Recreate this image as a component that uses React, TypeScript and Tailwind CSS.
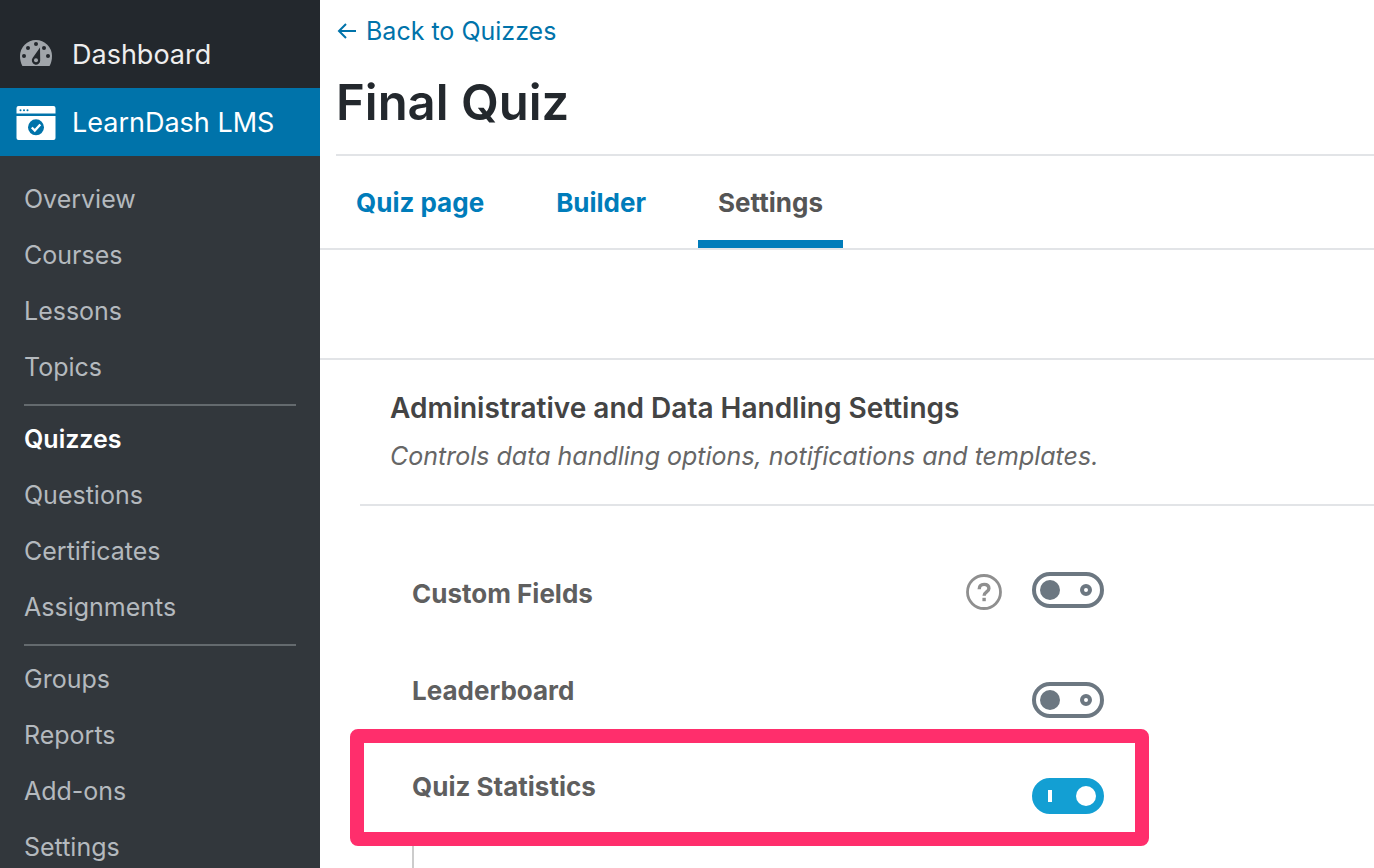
import React from 'react';
import { clsx } from 'clsx';

const menuGroups = [
  ['Overview', 'Courses', 'Lessons', 'Topics'],
  ['Quizzes', 'Questions', 'Certificates', 'Assignments'],
  ['Groups', 'Reports', 'Add-ons', 'Settings'],
];

const tabs = ['Quiz page', 'Builder', 'Settings'];

const DashboardIcon: React.FC = () => (
  <svg viewBox="0 0 40 40" className="size-10 shrink-0" aria-hidden="true">
    <path d="M20 6a16 16 0 0 1 16 16c0 3.800-.8 7-2.400 10H6.400C4.800 29 4 25.800 4 22A16 16 0 0 1 20 6z" fill="#a0a5aa" />
    <g fill="#23282d">
      <circle cx="20" cy="10" r="2" />
      <circle cx="12" cy="14" r="2" />
      <circle cx="28" cy="14" r="2" />
      <circle cx="8" cy="22" r="2" />
      <circle cx="32" cy="22" r="2" />
      <path d="M24 13.500 16.600 24a4.200 4.200 0 1 0 7.600 2.200z" />
    </g>
    <circle cx="20" cy="26.300" r="2" fill="#a0a5aa" />
  </svg>
);

const LearnDashIcon: React.FC = () => (
  <svg viewBox="0 0 40 40" className="size-10 shrink-0" aria-hidden="true">
    <path d="M2 4h35.500a2 2 0 0 1 2 2v5.500h-39V6a2 2 0 0 1 2-2z" fill="#fff" />
    <path d="M.5 14h39v22a2 2 0 0 1-2 2h-35a2 2 0 0 1-2-2z" fill="#fff" />
    <g fill="#0073aa">
      <circle cx="4.500" cy="8.200" r="1" />
      <circle cx="8" cy="8.200" r="1" />
      <circle cx="11.500" cy="8.200" r="1" />
      <circle cx="20" cy="25.300" r="8" />
    </g>
    <path d="m15.800 25.500 3 3 5.500-6" fill="none" stroke="#fff" strokeWidth="2.400" />
  </svg>
);

const HelpIcon: React.FC = () => (
  <svg viewBox="0 0 36 36" className="size-9" fill="none" stroke="#8f8f8f" aria-hidden="true">
    <circle cx="18" cy="18" r="16.500" strokeWidth="2.800" />
    <path d="M13.200 15.200c0-3.200 2-4.800 4.900-4.800s4.800 1.600 4.800 4.200c0 3.400-4.800 3.400-4.800 7.200" strokeWidth="3.400" />
    <path d="M16.400 25.500h3.400" strokeWidth="3.400" />
  </svg>
);

interface ToggleProps {
  id: string;
  defaultChecked?: boolean;
}

const Toggle: React.FC<ToggleProps> = ({ id, defaultChecked }) => (
  <input
    id={id}
    type="checkbox"
    role="switch"
    defaultChecked={defaultChecked}
    className={clsx(
      'flex h-9 w-18 shrink-0 cursor-pointer appearance-none items-center justify-between rounded-full border-4 border-[#6c7781] pr-2 pl-1',
      'before:size-5 before:rounded-full before:bg-[#6c7781] after:size-3 after:rounded-full after:border-4 after:border-[#6c7781]',
      'checked:border-[#139fd3] checked:bg-[#139fd3] checked:pr-1 checked:pl-3',
      'checked:before:h-3 checked:before:w-1 checked:before:rounded-none checked:before:bg-white',
      'checked:after:size-5 checked:after:border-0 checked:after:bg-white'
    )}
  />
);

const Sidebar: React.FC = () => (
  <aside className="w-80 shrink-0 bg-[#23282d] pt-5">
    <a href="#dashboard" className="flex h-17 items-center gap-4 px-4 text-[27px] text-[#eee]">
      <DashboardIcon />
      <span className="pt-0.5">Dashboard</span>
    </a>
    <a href="#learndash" className="flex h-17 items-center gap-4 bg-[#0073aa] px-4 text-[27px] text-white">
      <LearnDashIcon />
      <span className="pt-0.5">LearnDash LMS</span>
    </a>
    <nav className="bg-[#32373c] px-6 pt-4 pb-4 text-[25px]">
      {menuGroups.map((group, index) => (
        <ul
          key={index}
          className={clsx(index > 0 && 'mt-2 border-t-2 border-[#646a6e] pt-1.5')}
        >
          {group.map((item) => (
            <li key={item}>
              <a
                href={`#${item.toLowerCase()}`}
                className={clsx(
                  'flex h-14 items-center',
                  item === 'Quizzes' ? 'font-semibold text-white' : 'text-[#b4b9be]'
                )}
              >
                {item}
              </a>
            </li>
          ))}
        </ul>
      ))}
    </nav>
  </aside>
);

const Header: React.FC = () => (
  <header className="border-b-2 border-[#e2e4e7]">
    <div className="ml-4 border-b-2 border-[#e2e4e7] pt-3 pb-4">
      <a href="#quizzes" className="flex h-10 items-center gap-2.5 text-[25px] text-[#0073aa]">
        <svg viewBox="0 0 20 20" className="size-5" fill="none" stroke="currentColor" strokeWidth="2" aria-hidden="true">
          <path d="M20 9H3M10 2 3 9l7 7" />
        </svg>
        Back to Quizzes
      </a>
      <h1 className="mt-4 text-[49px] leading-[70px] font-semibold text-[#23282d]">Final Quiz</h1>
    </div>
    <nav className="ml-4 flex gap-8 text-[26px] font-bold">
      {tabs.map((tab) => (
        <a
          key={tab}
          href={`#${tab.toLowerCase().replace(' ', '-')}`}
          className={clsx(
            'flex h-23 items-center border-b-8 px-5 pt-2',
            tab === 'Settings' ? 'border-[#007cba] text-[#555]' : 'border-transparent text-[#007cba]'
          )}
        >
          {tab}
        </a>
      ))}
    </nav>
  </header>
);

export default function App() {
  return (
    <div className="flex h-screen overflow-hidden bg-white font-['Inter',sans-serif]">
      <Sidebar />
      <main className="min-w-0 flex-1">
        <Header />
        <div className="h-[110px] border-b-2 border-[#e2e4e7]" />

        <section>
          <div className="ml-10 border-b-2 border-[#e2e4e7] px-[30px] py-7">
            <h2 className="text-[28px] leading-10 font-semibold text-[#444]">
              Administrative and Data Handling Settings
            </h2>
            <p className="mt-2 text-[25px] leading-10 text-[#666] italic">
              Controls data handling options, notifications and templates.
            </p>
          </div>

          <div className="max-w-[784px] pt-[66px] pl-[92px] text-[26px] leading-9 font-bold text-[#5f5f5f]">
            <div className="flex items-start gap-[30px]">
              <label htmlFor="custom-fields" className="flex-1 pt-1">Custom Fields</label>
              <button type="button" aria-label="Help" className="pt-0.5">
                <HelpIcon />
              </button>
              <Toggle id="custom-fields" />
            </div>

            <div className="mt-[61px] flex h-[45px] items-start justify-between">
              <label htmlFor="leaderboard">Leaderboard</label>
              <div className="self-end">
                <Toggle id="leaderboard" />
              </div>
            </div>

            <div className="relative mt-[51px] flex h-[45px] items-start justify-between">
              <div className="pointer-events-none absolute -top-10 -right-[45px] -bottom-8 -left-[62px] rounded-lg border-[14px] border-[#ff2e6c]" />
              <label htmlFor="quiz-statistics">Quiz Statistics</label>
              <div className="self-end">
                <Toggle id="quiz-statistics" defaultChecked />
              </div>
            </div>

            <div className="mt-8 h-24 border-l-2 border-[#ccc]" />
          </div>
        </section>
      </main>
    </div>
  );
}
